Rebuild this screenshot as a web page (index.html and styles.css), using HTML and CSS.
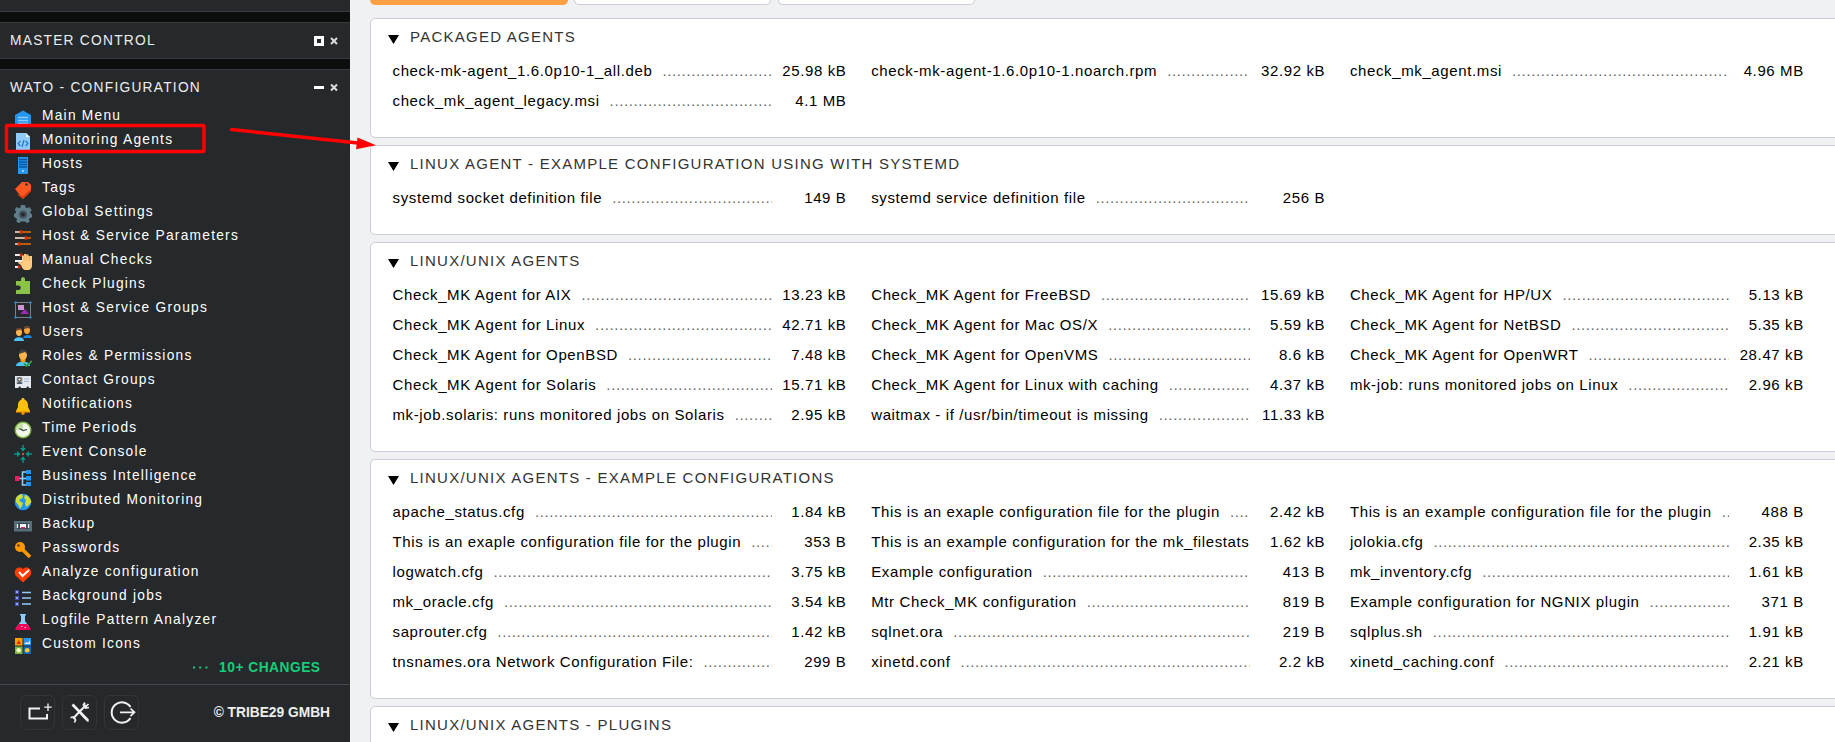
FILE: index.html
```html
<!DOCTYPE html>
<html lang="en">
<head>
<meta charset="utf-8">
<title>Monitoring Agents</title>
<link rel="stylesheet" href="styles.css">
</head>
<body>
<div class="app">
<aside class="sidebar">
  <div class="snapin snapin-stub"></div>
  <section class="snapin snapin-closed">
    <header class="snapin-head"><h2>Master control</h2>
      <svg class="tools" viewBox="0 0 26 12"><rect x="1.5" y="1.5" width="7" height="7" fill="none" stroke="#fff" stroke-width="3"/><path d="M17 2l6 6M23 2l-6 6" stroke="#ddd" stroke-width="2"/></svg>
    </header>
  </section>
  <section class="snapin snapin-open">
    <header class="snapin-head"><h2>WATO - Configuration</h2>
      <svg class="tools" viewBox="0 0 26 12"><path d="M0 4.500h10" stroke="#fff" stroke-width="3"/><path d="M17 1.500l6 6M23 1.500l-6 6" stroke="#ddd" stroke-width="2"/></svg>
    </header>
    <ul class="menu">
      <li><svg viewBox="0 0 18 18"><path d="M1 6l8-4.500 8 4.500v11H1z" fill="#2196f3"/><path d="M4 8.500h10M4 11.500h10M4 14.500h10" stroke="#90caf9" stroke-width="1.500"/></svg><a>Main Menu</a></li>
      <li><svg viewBox="0 0 18 18"><path d="M2 0h10l4 4v14H2z" fill="#90caf9"/><path d="M12 0v4h4z" fill="#e1f5fe"/><path d="M6.500 8L4 10.500 6.500 13M11.500 8l2.500 2.500-2.500 2.500M10 7l-2 7" fill="none" stroke="#1976d2" stroke-width="1.200"/></svg><a>Monitoring Agents</a></li>
      <li><svg viewBox="0 0 18 18"><path d="M4 0h10v17H4z" fill="#2196f3"/><path d="M5 2.500h8M5 5h8M5 7.500h8M5 10h8" stroke="#0d569b" stroke-width="1.300"/><circle cx="9" cy="14" r="1" fill="#bbdefb"/></svg><a>Hosts</a></li>
      <li><svg viewBox="0 0 18 18"><path d="M1 8l7-7h6l3 3v6l-8 8z" fill="#ff5722"/><path d="M2.500 13L9 18l8-8V8l-8 7z" fill="#dd3b0a"/><circle cx="12.500" cy="3.500" r="1.200" fill="#26292b"/></svg><a>Tags</a></li>
      <li><svg viewBox="0 0 18 18"><path d="M7 0h4l.6 2.500 1.400.7 2.400-1.300 2.300 3-1.500 2 .3 1.400 1.800 1v3l-2.500.8-.8 1.200.7 2.300-2.700 1.600-1.900-1.700H7l-2 1.700-2.700-1.600.7-2.300-.8-1.300L0 12V9l1.800-1 .3-1.200-1.500-2 2.100-2.800 2.500 1.200 1.300-.7z" fill="#607d8b"/><circle cx="9" cy="9.500" r="4" fill="#40535d"/><circle cx="9" cy="9.500" r="2" fill="#26292b"/></svg><a>Global Settings</a></li>
      <li><svg viewBox="0 0 18 18"><path d="M1 3h16M1 9h16M1 15h16" stroke="#ef6c00" stroke-width="1.700"/><path d="M1 3h5M1 9h10M1 15h3" stroke="#cfd8dc" stroke-width="1.700"/><path d="M7 1.300v3.400M12 7.300v3.400M5 13.300v3.400" stroke="#dd2c00" stroke-width="2.600"/></svg><a>Host &amp; Service Parameters</a></li>
      <li><svg viewBox="0 0 18 18"><path d="M1 2h7M1 8h7M1 14h4" stroke="#eceff1" stroke-width="1.800"/><path d="M7 .5v3M5 12.500v3" stroke="#dd2c00" stroke-width="2.500"/><path d="M7 12L4 10l1-1.800 3 1.300V2.500h2v-1.500h2v.5h2.500V3H18v9c0 3-1 4-3 5h-4c-2-.5-3-2-4-5z" fill="#ffcc80"/><path d="M10.200 2.500v5M12.800 2v5.500M15.400 3v5" stroke="#d99a51" stroke-width=".7"/></svg><a>Manual Checks</a></li>
      <li><svg viewBox="0 0 18 18"><path d="M2 4h5V2c0-2.500 4-2.500 4 0v2h5v13H2v-4h2.500c3 0 3-4.500 0-4.500H2z" fill="#8bc34a"/></svg><a>Check Plugins</a></li>
      <li><svg viewBox="0 0 18 18"><rect x="1.500" y="1.500" width="15" height="15" fill="none" stroke="#71808a"/><path d="M.5.5h2v2h-2zM15.500.5h2v2h-2zM.5 15.500h2v2h-2zM15.500 15.500h2v2h-2z" fill="#2196f3"/><path d="M4 4h6v5H4z" fill="#ce93d8"/><path d="M6 13l5-5 4 5z" fill="#9c27b0"/></svg><a>Host &amp; Service Groups</a></li>
      <li><svg viewBox="0 0 18 18"><path d="M9 13c1-4 9-4 9 0z" fill="#1e88e5"/><ellipse cx="13" cy="5" rx="3" ry="4" fill="#f9a33b"/><path d="M10 4c0-4 6-4 6 0l-2-1z" fill="#5b4037"/><path d="M0 16c0-5 10-5 10 0z" fill="#4fc3f7"/><ellipse cx="5" cy="7" rx="3" ry="4" fill="#ffb74d"/><path d="M2 6c0-4.500 6-4.500 6 0L6 4.500z" fill="#6b3e27"/></svg><a>Users</a></li>
      <li><svg viewBox="0 0 18 18"><path d="M2 17c0-6 14-6 14 0z" fill="#4fc3f7"/><path d="M6.500 9h5v3l-2.500 2-2.500-2z" fill="#ff9800"/><ellipse cx="9" cy="6" rx="4" ry="5" fill="#ffb74d"/><path d="M5 5c0-6 8-6 8 0l-2-2z" fill="#424242"/><path d="M10 14.500l2.500 2.500L18 12" fill="none" stroke="#2e9e45" stroke-width="1.800"/></svg><a>Roles &amp; Permissions</a></li>
      <li><svg viewBox="0 0 18 18"><path d="M1 3h16v12h-2l-1-2-2 2H7l-1-2-2 2H1z" fill="#e3e8f1"/><rect x="2.500" y="4" width="6" height="7" fill="#a9aeb5"/><circle cx="5.500" cy="6.500" r="1.700" fill="#ffe0c0" stroke="#263238"/><path d="M3 11c0-3 5-3 5 0z" fill="#455a64"/><path d="M10 6h5M10 8.500h5" stroke="#a9bdd0"/></svg><a>Contact Groups</a></li>
      <li><svg viewBox="0 0 18 18"><path d="M9 1c1.200 0 1.500.7 1.500 1.500C14 4 14 7 14 9.500c0 2 2 3 2 5.500H2c0-2.500 2-3.500 2-5.500C4 7 4 4 7.500 2.500 7.500 1.700 7.800 1 9 1z" fill="#ffc107"/><path d="M2 14h14v1.500H2z" fill="#ffa000"/><circle cx="9" cy="16.300" r="1.600" fill="#ff8f00"/></svg><a>Notifications</a></li>
      <li><svg viewBox="0 0 18 18"><circle cx="9" cy="9" r="7.800" fill="#f1f8e9" stroke="#7cb342" stroke-width="1.400"/><path d="M9 9V2A7 7 0 0 0 2 9z" fill="#c5e1a5"/><path d="M5.500 7.500L9 9.500l4-1" fill="none" stroke="#37474f" stroke-width="1.200"/></svg><a>Time Periods</a></li>
      <li><svg viewBox="0 0 18 18"><path d="M9 0v6M9 12v6M0 9h6M12 9h6" stroke="#009688" stroke-width="1.500"/><path d="M6 3h6L9 6.500zM6 15h6L9 11.500zM3 6v6L6.500 9zM15 6v6L11.500 9z" fill="#009688"/><circle cx="9" cy="9" r="1.200" fill="#f44336"/></svg><a>Event Console</a></li>
      <li><svg viewBox="0 0 18 18"><path d="M5 9.500h7M13 3H8.500v13H13" fill="none" stroke="#90caf9" stroke-width="1.600"/><path d="M1 7h4.500v5H1z" fill="#e91e63"/><path d="M12 1h5v4h-5zM12 7h5v4.500h-5zM12 13h5v4h-5z" fill="#2196f3"/></svg><a>Business Intelligence</a></li>
      <li><svg viewBox="0 0 18 18"><circle cx="9" cy="9" r="8.300" fill="#2196f3"/><path d="M2 5c2-3 4-4 6-4l1 3-2 2-2 1 2 2 2 1-1 3-2 3-1-3-3-4zM11 2c3 0 6 4 6.300 7L15 12l-3 2-1-4 1-3-2-2z" fill="#cddc39"/></svg><a>Distributed Monitoring</a></li>
      <li><svg viewBox="0 0 18 18"><path d="M0 4h18v10.500H0z" fill="#546e7a"/><path d="M3 6h12v6H3z" fill="#37474f"/><path d="M3.500 7v4M14.500 7v4" stroke="#eceff1" stroke-width="1.300"/><path d="M6 7h6v4H6z" fill="#f5f5f5"/><path d="M7 10h4v1.500H7z" fill="#e91e63"/></svg><a>Backup</a></li>
      <li><svg viewBox="0 0 18 18"><path d="M8 8l8 8" stroke="#ff9800" stroke-width="3.600"/><circle cx="6" cy="6" r="5" fill="#ff9800"/><circle cx="4.500" cy="4.500" r="1.300" fill="#5d4037"/></svg><a>Passwords</a></li>
      <li><svg viewBox="0 0 18 18"><path d="M9 17.500L2 11C-2 6 4-.5 9 4c5-4.500 11 2 7 7z" fill="#ff3d00"/><path d="M5 7l3.500 4L15 5" fill="none" stroke="#fff" stroke-width="2"/></svg><a>Analyze configuration</a></li>
      <li><svg viewBox="0 0 18 18"><path d="M1 1h4v4H1zM1 7h4v4H1zM1 13h4v4H1z" fill="#3f51b5"/><path d="M2.300 2.300h1.400v1.400H2.300zM2.300 8.300h1.400v1.400H2.300zM2.300 14.300h1.400v1.400H2.300z" fill="#e8eaf6"/><path d="M8 3.500h9M8 9h9M8 15h9" stroke="#90caf9" stroke-width="1.500"/></svg><a>Background jobs</a></li>
      <li><svg viewBox="0 0 18 18"><path d="M6 1h6v1.500h-1V8l5 7c.8 1.300 0 2-1.500 2h-11C2 17 1.200 16.300 2 15l5-7V2.500H6z" fill="#90caf9"/><path d="M5 11h8l3.500 4.500c.2 1-.5 1.500-1.500 1.500H3c-1 0-1.700-.5-1.500-1.500z" fill="#f50057"/><path d="M7 13h1.500v1H7zM10.500 14h1.500v1h-1.500z" fill="#f8bbd0"/></svg><a>Logfile Pattern Analyzer</a></li>
      <li><svg viewBox="0 0 18 18"><path d="M1 1h7.500v7.500H1z" fill="#ffa000"/><path d="M2.500 7l2.300-4L7 7z" fill="#dd2c00"/><path d="M9.500 1H17v7.500H9.500z" fill="#2196f3"/><path d="M10 7l2.500-2 1.500 1 2-3v4z" fill="#e3f2fd"/><path d="M1 9.500h7.500V17H1z" fill="#7cb342"/><circle cx="4.700" cy="13.200" r="2.300" fill="#f1f8c0"/><path d="M9.500 9.500H17V17H9.500z" fill="#1565c0"/><circle cx="13.200" cy="13.200" r="2.300" fill="#ffca28"/></svg><a>Custom Icons</a></li>
    </ul>
    <div class="changes"><svg viewBox="0 0 16 3"><path d="M0 1.500h2M6.200 1.500h2M12.400 1.500h2" stroke="#17cd7a" stroke-width="2"/></svg><b>10+ changes</b></div>
  </section>
  <footer class="side-foot">
    <span class="btn"><svg viewBox="0 0 35 35"><path d="M20 13.500H9.500v10h17.500V19" fill="none" stroke="#f2f2f2" stroke-width="2"/><path d="M28 8.500v7.500M24.300 12.200h7.400" stroke="#f2f2f2" stroke-width="1.300"/></svg></span>
    <span class="btn"><svg viewBox="0 0 35 35"><path d="M10.500 9.500L26 25.500" stroke="#f2f2f2" stroke-width="2.600"/><path d="M24 10L11 23.500" stroke="#f2f2f2" stroke-width="2"/><path d="M21 10.500l2-3M27 12.500l-3.500.5-1.500-3M23.500 12l3-3M8.500 22.500l3.500-.5 1.500 3-1 2.500M20 20l6.500 6.500" fill="none" stroke="#f2f2f2" stroke-width="1.700"/></svg></span>
    <span class="btn"><svg viewBox="0 0 35 35"><path d="M26.500 12A10.200 10.200 0 1 0 26.500 23" fill="none" stroke="#f2f2f2" stroke-width="2"/><path d="M16 17.300h14M26.500 13.500l4 3.800-4 3.800" fill="none" stroke="#f2f2f2" stroke-width="1.700"/></svg></span>
    <b class="vendor">© tribe29 GmbH</b>
  </footer>
</aside>

<main class="content">
  <nav class="tabs"><span class="tab tab-hot"></span><span class="tab"></span><span class="tab"></span></nav>

  <section class="panel">
    <h3><svg viewBox="0 0 11 9"><path d="M0 0h11L5.500 9z"/></svg>Packaged Agents</h3>
    <ul class="files">
      <li><a>check-mk-agent_1.6.0p10-1_all.deb</a><i></i><span>25.98 kB</span></li>
      <li><a>check-mk-agent-1.6.0p10-1.noarch.rpm</a><i></i><span>32.92 kB</span></li>
      <li><a>check_mk_agent.msi</a><i></i><span>4.96 MB</span></li>
      <li><a>check_mk_agent_legacy.msi</a><i></i><span>4.1 MB</span></li>
    </ul>
  </section>

  <section class="panel">
    <h3><svg viewBox="0 0 11 9"><path d="M0 0h11L5.500 9z"/></svg>Linux Agent - Example configuration using with systemd</h3>
    <ul class="files">
      <li><a>systemd socket definition file</a><i></i><span>149 B</span></li>
      <li><a>systemd service definition file</a><i></i><span>256 B</span></li>
    </ul>
  </section>

  <section class="panel">
    <h3><svg viewBox="0 0 11 9"><path d="M0 0h11L5.500 9z"/></svg>Linux/Unix Agents</h3>
    <ul class="files">
      <li><a>Check_MK Agent for AIX</a><i></i><span>13.23 kB</span></li>
      <li><a>Check_MK Agent for FreeBSD</a><i></i><span>15.69 kB</span></li>
      <li><a>Check_MK Agent for HP/UX</a><i></i><span>5.13 kB</span></li>
      <li><a>Check_MK Agent for Linux</a><i></i><span>42.71 kB</span></li>
      <li><a>Check_MK Agent for Mac OS/X</a><i></i><span>5.59 kB</span></li>
      <li><a>Check_MK Agent for NetBSD</a><i></i><span>5.35 kB</span></li>
      <li><a>Check_MK Agent for OpenBSD</a><i></i><span>7.48 kB</span></li>
      <li><a>Check_MK Agent for OpenVMS</a><i></i><span>8.6 kB</span></li>
      <li><a>Check_MK Agent for OpenWRT</a><i></i><span>28.47 kB</span></li>
      <li><a>Check_MK Agent for Solaris</a><i></i><span>15.71 kB</span></li>
      <li><a>Check_MK Agent for Linux with caching</a><i></i><span>4.37 kB</span></li>
      <li><a>mk-job: runs monitored jobs on Linux</a><i></i><span>2.96 kB</span></li>
      <li><a>mk-job.solaris: runs monitored jobs on Solaris</a><i></i><span>2.95 kB</span></li>
      <li><a>waitmax - if /usr/bin/timeout is missing</a><i></i><span>11.33 kB</span></li>
    </ul>
  </section>

  <section class="panel">
    <h3><svg viewBox="0 0 11 9"><path d="M0 0h11L5.500 9z"/></svg>Linux/Unix Agents - Example Configurations</h3>
    <ul class="files">
      <li><a>apache_status.cfg</a><i></i><span>1.84 kB</span></li>
      <li><a>This is an exaple configuration file for the plugin</a><i></i><span>2.42 kB</span></li>
      <li><a>This is an example configuration file for the plugin</a><i></i><span>488 B</span></li>
      <li><a>This is an exaple configuration file for the plugin</a><i></i><span>353 B</span></li>
      <li><a>This is an example configuration for the mk_filestats</a><i></i><span>1.62 kB</span></li>
      <li><a>jolokia.cfg</a><i></i><span>2.35 kB</span></li>
      <li><a>logwatch.cfg</a><i></i><span>3.75 kB</span></li>
      <li><a>Example configuration</a><i></i><span>413 B</span></li>
      <li><a>mk_inventory.cfg</a><i></i><span>1.61 kB</span></li>
      <li><a>mk_oracle.cfg</a><i></i><span>3.54 kB</span></li>
      <li><a>Mtr Check_MK configuration</a><i></i><span>819 B</span></li>
      <li><a>Example configuration for NGNIX plugin</a><i></i><span>371 B</span></li>
      <li><a>saprouter.cfg</a><i></i><span>1.42 kB</span></li>
      <li><a>sqlnet.ora</a><i></i><span>219 B</span></li>
      <li><a>sqlplus.sh</a><i></i><span>1.91 kB</span></li>
      <li><a>tnsnames.ora Network Configuration File:</a><i></i><span>299 B</span></li>
      <li><a>xinetd.conf</a><i></i><span>2.2 kB</span></li>
      <li><a>xinetd_caching.conf</a><i></i><span>2.21 kB</span></li>
    </ul>
  </section>

  <section class="panel">
    <h3><svg viewBox="0 0 11 9"><path d="M0 0h11L5.500 9z"/></svg>Linux/Unix Agents - Plugins</h3>
  </section>
</main>
</div>

<svg class="annotation" viewBox="0 0 380 160">
  <rect x="6.500" y="125.500" width="197.500" height="26" rx="1" fill="none" stroke="#f00" stroke-width="3.500"/>
  <path d="M231.500 129.500L358 143" stroke="#f00" stroke-width="3.500" stroke-linecap="round"/>
  <path d="M357.500 137.500L376 145.300L356 149.300z" fill="#f00"/>
</svg>
</body>
</html>
```
FILE: styles.css
```css
* { box-sizing: border-box; }

body {
  margin: 0;
  width: 1835px;
  height: 742px;
  overflow: hidden;
  position: relative;
  background: #f0f1f3;
  font-family: "Liberation Sans", Arial, sans-serif;
  font-size: 15px;
  color: #000;
}

ul { list-style: none; margin: 0; padding: 0; }
h2, h3 { margin: 0; font-weight: normal; text-transform: uppercase; }

.app { display: flex; height: 742px; }

/* Sidebar */
.sidebar {
  width: 350px;
  flex: none;
  display: flex;
  flex-direction: column;
  gap: 10px;
  background: #0c0e0e;
  color: #fff;
  font-size: 13.75px;
  letter-spacing: 1.25px;
}
.snapin {
  background: #26292b;
  border: 1px solid #373b3e;
  border-width: 1px 0;
}
.snapin-stub { height: 12px; border-top: 0; }
.snapin-closed { height: 37px; }
.snapin-open { flex: 1; border-bottom: 0; }
.snapin-head {
  display: flex;
  justify-content: space-between;
  height: 33px;
  padding: 5px 10px 0;
}
.snapin-head h2 {
  font-size: 13.75px;
  line-height: 25px;
  color: #eceded;
}
.tools { width: 26px; height: 12px; margin-top: 8px; }

.menu li {
  display: flex;
  gap: 10px;
  height: 24px;
  padding-left: 14px;
  line-height: 26px;
}
.menu svg { width: 18px; height: 18px; margin-top: 6px; }

.changes {
  display: flex;
  align-items: center;
  justify-content: flex-end;
  gap: 10px;
  height: 24px;
  padding-right: 29.5px;
  color: #17cd7a;
  letter-spacing: 0.5px;
  text-transform: uppercase;
}
.changes svg { width: 16px; height: 3px; }

.side-foot {
  display: flex;
  align-items: center;
  gap: 7px;
  height: 58px;
  margin-top: -10px;
  padding: 0 20px 2px;
  background: #26292b;
  border-top: 1px solid #43474c;
}
.btn {
  width: 35px;
  height: 35px;
  border: 1px solid #313537;
  border-radius: 6px;
}
.btn svg { display: block; width: 35px; height: 35px; margin: -1px; }
.vendor {
  margin-left: auto;
  color: #eee;
  letter-spacing: 0;
  text-transform: uppercase;
}

/* Content */
.content {
  flex: 1;
  min-width: 0;
  overflow: hidden;
  padding-left: 20px;
}
.tabs { display: flex; gap: 7px; height: 18px; }
.tab {
  width: 197px;
  height: 5px;
  background: #fff;
  border: 1px solid #cbcbdc;
  border-top: 0;
  border-radius: 0 0 5px 5px;
}
.tab-hot { width: 198px; margin-right: -1px; background: #ffa042; border-color: #ffa042; }

.panel {
  width: 1500px;
  margin-bottom: 7px;
  padding: 0 0 21px 21.5px;
  background: #fff;
  border: 1px solid #cbcbdc;
  border-radius: 5px;
}
.panel h3 {
  display: flex;
  gap: 11px;
  height: 37px;
  margin-left: -4.5px;
  line-height: 36px;
  font-size: 15px;
  letter-spacing: 1.25px;
  color: #333;
}
.panel h3 svg { width: 11px; height: 9px; margin-top: 16px; }

.files {
  display: grid;
  grid-template-columns: repeat(3, 454px);
  column-gap: 24.7px;
  letter-spacing: 0.625px;
}
.files li {
  display: flex;
  height: 30px;
  line-height: 30px;
  white-space: nowrap;
}
/* Dot leader between name and size */
.files i {
  flex: 1 1 0;
  min-width: 0;
  margin-left: 10px;
  overflow: hidden;
  font-style: normal;
  color: #666;
}
.files i::after {
  content: "................................................................................";
}
.files span { width: 75px; text-align: right; }

/* Callout drawn over the page */
.annotation {
  position: absolute;
  left: 0;
  top: 0;
  width: 380px;
  height: 160px;
}
```
